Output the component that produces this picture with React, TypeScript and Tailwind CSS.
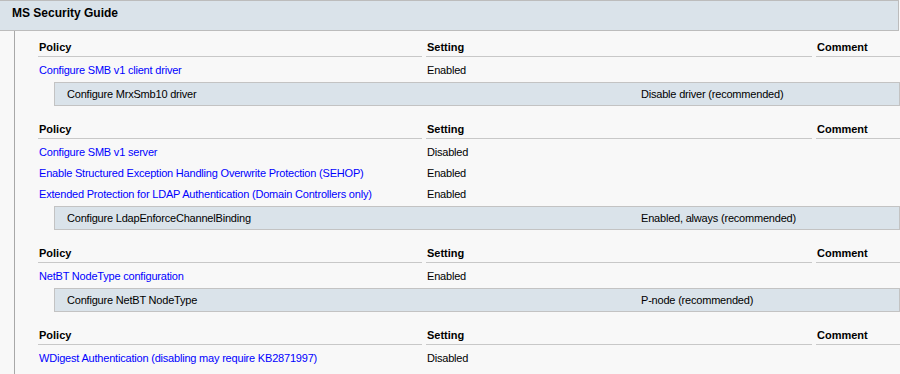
import React from "react";

type Row = { policy: string; setting: string };
type Sub = { name: string; value: string };
type Section = { rows: Row[]; sub?: Sub };

const sections: Section[] = [
  {
    rows: [{ policy: "Configure SMB v1 client driver", setting: "Enabled" }],
    sub: { name: "Configure MrxSmb10 driver", value: "Disable driver (recommended)" },
  },
  {
    rows: [
      { policy: "Configure SMB v1 server", setting: "Disabled" },
      { policy: "Enable Structured Exception Handling Overwrite Protection (SEHOP)", setting: "Enabled" },
      { policy: "Extended Protection for LDAP Authentication (Domain Controllers only)", setting: "Enabled" },
    ],
    sub: { name: "Configure LdapEnforceChannelBinding", value: "Enabled, always (recommended)" },
  },
  {
    rows: [{ policy: "NetBT NodeType configuration", setting: "Enabled" }],
    sub: { name: "Configure NetBT NodeType", value: "P-node (recommended)" },
  },
  {
    rows: [{ policy: "WDigest Authentication (disabling may require KB2871997)", setting: "Disabled" }],
  },
];

function PolicyTable({ section, first }: { section: Section; first: boolean }) {
  return (
    <div className={first ? "" : "mt-[12px]"}>
      <div className="grid grid-cols-[384px_386px_90px] gap-x-[4px] font-bold text-black">
        <div className="h-[21px] leading-[22px] pl-[1px] border-b border-[#c8c8c8]">Policy</div>
        <div className="h-[21px] leading-[22px] pl-[1px] border-b border-[#c8c8c8]">Setting</div>
        <div className="h-[21px] leading-[22px] pl-[1px] border-b border-[#c8c8c8]">Comment</div>
      </div>
      <div className="pt-[2px] tracking-[-0.2px]">
        {section.rows.map((r) => (
          <div key={r.policy} className="grid grid-cols-[384px_386px_90px] gap-x-[4px] h-[21px] leading-[22px]">
            <div className="pl-[1px] text-[#0000ff] whitespace-nowrap">{r.policy}</div>
            <div className="pl-[1px] text-black">{r.setting}</div>
            <div />
          </div>
        ))}
      </div>
      {section.sub && (
        <div className="mt-[2px] ml-[16px] h-[24px] border border-[#c3c3c3] bg-[#dae3ea] grid grid-cols-[574px_1fr] pl-[12px] items-center text-black tracking-[-0.2px]">
          <div>{section.sub.name}</div>
          <div>{section.sub.value}</div>
        </div>
      )}
    </div>
  );
}

export default function App() {
  return (
    <div className="w-[900px] h-[374px] overflow-hidden bg-[#f8f8f8] font-['Liberation_Sans',Arial,sans-serif] text-[11px]">
      <div className="h-[31px] border-t border-b border-r border-[#bcbcbc] bg-[#dae3ea] pl-[12px] pt-[4px] leading-[16px] text-[12px] font-bold text-black w-[899px]">
        MS Security Guide
      </div>
      <div className="ml-[14px] h-[343px] border-l border-[#a8a8a8] pl-[23px] pt-[5px]">
        {sections.map((s, i) => (
          <PolicyTable key={i} section={s} first={i === 0} />
        ))}
      </div>
    </div>
  );
}
